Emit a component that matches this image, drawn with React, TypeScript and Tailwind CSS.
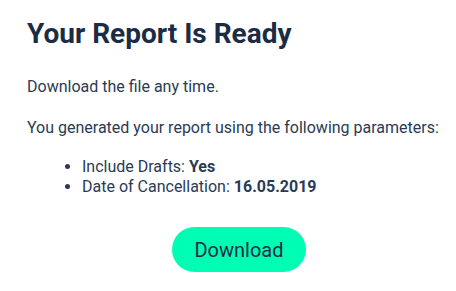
export default function App() {
  return (
    <div className="min-h-screen bg-white px-[27px] pt-[17px] font-['Roboto',sans-serif] text-[#2a3b55]">
      <h1 className="text-[28px] font-bold leading-[34px] text-[#1c2c44]">Your Report Is Ready</h1>

      <p className="mt-[26px] text-[16px] leading-[20px]">Download the file any time.</p>

      <p className="mt-[21px] whitespace-nowrap text-[16px] leading-[20px]">
        You generated your report using the following parameters:
      </p>

      <ul className="mt-[19px] list-disc pl-[55px] text-[16px] leading-[20px]">
        <li>
          Include Drafts: <span className="font-bold">Yes</span>
        </li>
        <li>
          Date of Cancellation: <span className="font-bold">16.05.2019</span>
        </li>
      </ul>

      <div className="mt-[30px] flex justify-center pl-[22px]">
        <button className="h-[45px] w-[134px] rounded-full bg-[#00fdb4] text-[20px] text-[#1c2c44]">
          Download
        </button>
      </div>
    </div>
  )
}
